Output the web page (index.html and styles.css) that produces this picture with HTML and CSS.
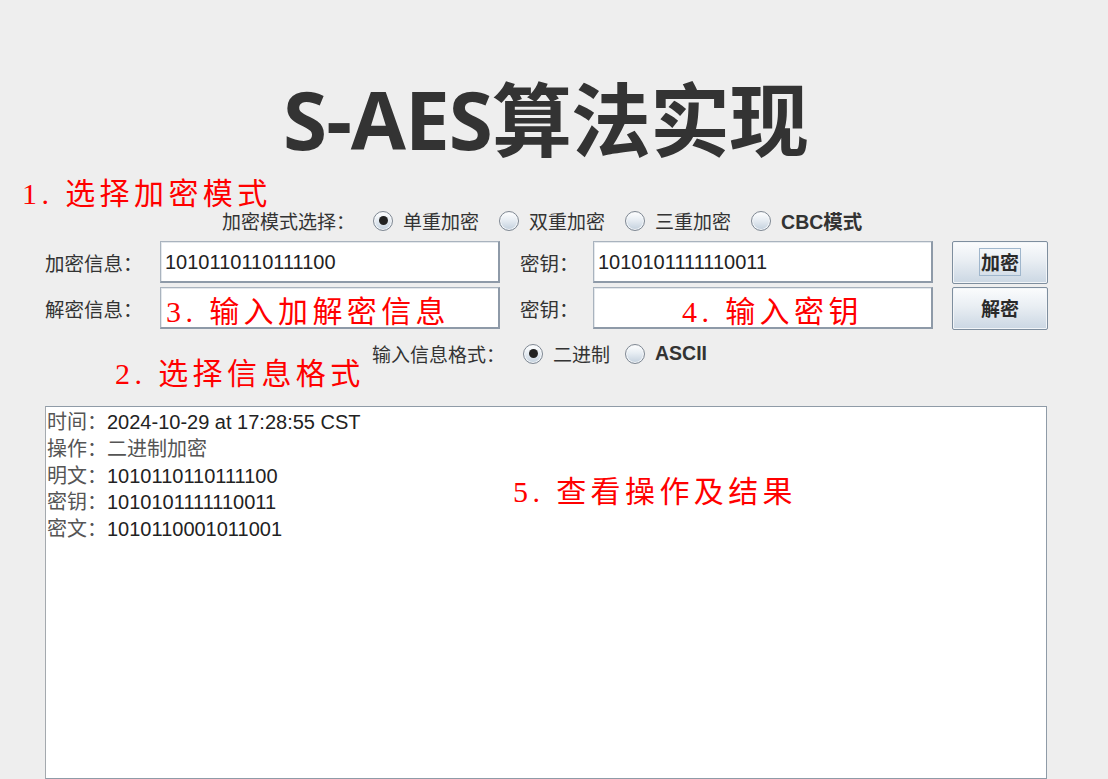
FILE: index.html
```html
<!DOCTYPE html>
<html lang="zh-CN">
<head>
<meta charset="utf-8">
<title>S-AES算法实现</title>
<link rel="stylesheet" href="styles.css">
</head>
<body>
<div class="app">
  <h1 class="title">S-AES算法实现</h1>

  <div class="radio-row mode-row">
    <span class="row-label">加密模式选择：</span>
    <label class="opt"><span class="radio checked"></span><span>单重加密</span></label>
    <label class="opt"><span class="radio"></span><span>双重加密</span></label>
    <label class="opt"><span class="radio"></span><span>三重加密</span></label>
    <label class="opt"><span class="radio"></span><span class="bold">CBC模式</span></label>
  </div>

  <div class="form-grid">
    <span class="field-label">加密信息：</span>
    <div class="field">1010110110111100</div>
    <span class="field-label key-label">密钥：</span>
    <div class="field">1010101111110011</div>
    <button class="btn"><span class="focus">加密</span></button>

    <span class="field-label">解密信息：</span>
    <div class="field"></div>
    <span class="field-label key-label">密钥：</span>
    <div class="field"></div>
    <button class="btn"><span class="nofocus">解密</span></button>
  </div>

  <div class="radio-row format-row">
    <span class="row-label">输入信息格式：</span>
    <label class="opt"><span class="radio checked"></span><span>二进制</span></label>
    <label class="opt"><span class="radio"></span><span class="bold">ASCII</span></label>
  </div>

  <div class="output">
    <div class="line"><span class="cjk">时间：</span>2024-10-29 at 17:28:55 CST</div>
    <div class="line"><span class="cjk">操作：二进制加密</span></div>
    <div class="line"><span class="cjk">明文：</span>1010110110111100</div>
    <div class="line"><span class="cjk">密钥：</span>1010101111110011</div>
    <div class="line"><span class="cjk">密文：</span>1010110001011001</div>
  </div>

  <div class="note n1">1. 选择加密模式</div>
  <div class="note n2">2. 选择信息格式</div>
  <div class="note n3">3. 输入加解密信息</div>
  <div class="note n4">4. 输入密钥</div>
  <div class="note n5">5. 查看操作及结果</div>
</div>
</body>
</html>
```

FILE: styles.css
```css
html, body {
  margin: 0;
  padding: 0;
  background: #eeeeee;
}
body {
  width: 1108px;
  height: 779px;
  overflow: hidden;
  font-family: "Liberation Sans", "Noto Sans CJK SC", sans-serif;
  font-size: 19.5px;
  color: #2b2b2b;
}
.app {
  position: relative;
  width: 1108px;
  height: 779px;
  display: flex;
  flex-direction: column;
}
.title {
  margin: 79px 17px 0 0;
  height: 80px;
  line-height: 80px;
  font-family: "Open Sans", "Noto Sans CJK SC", sans-serif;
  font-weight: 700;
  font-size: 80px;
  text-align: center;
  color: #333333;
  letter-spacing: -1px;
}
.radio-row {
  display: flex;
  align-items: center;
  height: 30px;
  color: #333;
}
.mode-row {
  margin: 47px 0 0 222px;
  font-size: 19px;
}
.format-row {
  margin: 11px 0 0 372px;
  font-size: 19px;
}
.row-label {
  margin-right: 18px;
}
.opt {
  display: flex;
  align-items: center;
  gap: 10px;
  margin-right: 20px;
}
.format-row .opt {
  margin-right: 15px;
}
.bold {
  font-weight: 700;
  font-size: 19.5px;
}
.radio {
  width: 18px;
  height: 18px;
  border-radius: 50%;
  border: 1px solid #7f8893;
  background: linear-gradient(#ffffff, #e7edf3 45%, #c3d0dd);
  box-shadow: inset 0 0 0 1px #f6f8fa;
  display: flex;
  align-items: center;
  justify-content: center;
}
.radio.checked::after {
  content: "";
  width: 9px;
  height: 9px;
  border-radius: 50%;
  background: #222;
}
.form-grid {
  margin: 6px 0 0 45px;
  display: grid;
  grid-template-columns: 115px 340px 93px 340px 96px;
  grid-template-rows: 42px 42px;
  row-gap: 4px;
  column-gap: 0;
  align-items: center;
}
.field-label {
  color: #333;
}
.key-label {
  padding-left: 20px;
}
.field {
  box-sizing: border-box;
  height: 42px;
  background: #fff;
  border-top: 1px solid #a9b3be;
  border-left: 1px solid #a9b3be;
  border-right: 2px solid #8e9aa8;
  border-bottom: 2px solid #8e9aa8;
  box-shadow: inset 1px 1px 0 #e4e8ec;
  padding: 0 4px;
  line-height: 40px;
  font-size: 20px;
  color: #222;
}
.btn {
  margin-left: 19px;
  width: 96px;
  height: 43px;
  box-sizing: border-box;
  border: 1px solid #7e8e9e;
  border-radius: 2px;
  background: linear-gradient(#fbfcfd, #e9eef3 45%, #cbd7e3);
  box-shadow: inset 0 0 0 1px #f2f5f8;
  font-family: "Noto Sans CJK SC", sans-serif;
  font-weight: 700;
  font-size: 19px;
  color: #2a2a2a;
  padding: 0;
  display: flex;
  align-items: center;
  justify-content: center;
}
.btn .focus {
  border: 1px solid #9fb6cc;
  padding: 0 1px;
  line-height: 26px;
}
.btn .nofocus {
  line-height: 26px;
}
.output {
  margin: 39px 0 0 45px;
  width: 1002px;
  height: 420px;
  box-sizing: border-box;
  background: #fff;
  border: 1px solid #8f9ba7;
  border-left-color: #a4a9ae;
  padding: 2px 1px;
  font-size: 20px;
  color: #222;
}
.line {
  height: 26.8px;
  line-height: 26.8px;
  white-space: nowrap;
}
.cjk {
  color: #555;
}
.note {
  position: absolute;
  font-family: "Liberation Serif", "Noto Sans CJK SC", serif;
  font-size: 30px;
  line-height: 30px;
  letter-spacing: 4.4px;
  color: #ff0000;
  white-space: nowrap;
}
.n1 { left: 22px; top: 179px; }
.n2 { left: 115px; top: 359px; }
.n3 { left: 166px; top: 297px; }
.n4 { left: 682px; top: 297px; }
.n5 { left: 513px; top: 477px; }
```
